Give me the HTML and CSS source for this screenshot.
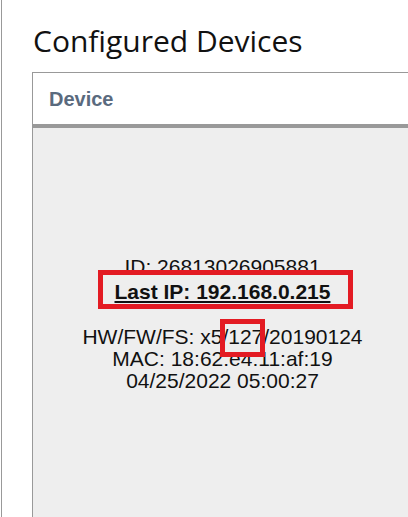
FILE: index.html
```html
<!DOCTYPE html>
<html lang="en">
<head>
    <meta charset="UTF-8">
    <title>Configured Devices</title>
    <link rel="stylesheet" href="styles.css">
</head>
<body>
    <div class="page">
        <h1>Configured Devices</h1>
        <div class="card">
            <div class="card-head">Device</div>
            <div class="card-body">
                <div class="device">
                    <div class="line">ID: 26813026905881</div>
                    <div class="line ip">Last IP: 192.168.0.215</div>
                    <div class="line">HW/FW/FS: x5/127/20190124</div>
                    <div class="line">MAC: 18:62:e4:11:af:19</div>
                    <div class="line">04/25/2022 05:00:27</div>
                    <!-- highlight boxes -->
                    <div class="mark mark-ip"></div>
                    <div class="mark mark-fw"></div>
                </div>
            </div>
        </div>
    </div>
</body>
</html>
```

FILE: styles.css
```css
html, body {
    margin: 0;
    padding: 0;
    height: 100%;
    overflow: hidden;
    background-color: #ffffff;
}
.page {
    margin-left: 1px;
    border-left: 1px solid #999;
    height: 100%;
    padding-left: 30px;
    padding-top: 22px;
    box-sizing: border-box;
    display: flex;
    flex-direction: column;
}
h1 {
    font-family: "Open Sans", sans-serif;
    font-weight: normal;
    font-size: 30px;
    line-height: 38px;
    margin: 0 0 12px 1px;
    color: #111;
    white-space: nowrap;
}
.card {
    border: 1px solid #999;
    border-bottom: none;
    width: 379px;
    flex: 1;
    display: flex;
    flex-direction: column;
}
.card-head {
    font-family: "Liberation Sans", Arial, sans-serif;
    font-weight: bold;
    font-size: 20px;
    color: #5a6a7e;
    height: 51px;
    line-height: 53px;
    padding-left: 16px;
    border-bottom: 4px solid #999;
}
.card-body {
    background-color: #eeeeee;
    flex: 1;
}
.device {
    position: relative;
    font-family: "Liberation Sans", Arial, sans-serif;
    font-size: 21px;
    line-height: 22px;
    color: #111;
    text-align: center;
    padding-top: 128px;
    white-space: nowrap;
}
.ip {
    font-weight: bold;
    text-decoration: underline;
    margin-top: 3px;
    margin-bottom: 23px;
}
.mark {
    position: absolute;
    border: 5px solid #e31b23;
}
.mark-ip {
    left: 65px;
    top: 142px;
    width: 245px;
    height: 29px;
}
.mark-fw {
    left: 187px;
    top: 191px;
    width: 35px;
    height: 28px;
}
```
